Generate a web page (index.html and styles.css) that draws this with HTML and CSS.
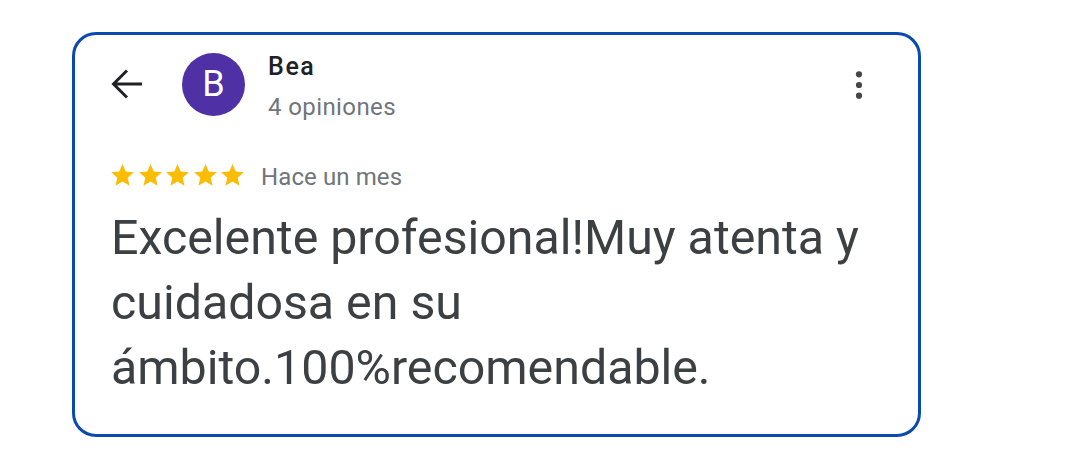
FILE: index.html
```html
<!DOCTYPE html>
<html lang="es">
<head>
<meta charset="utf-8">
<title>Opinión</title>
<link rel="stylesheet" href="styles.css">
</head>
<body>
<div class="card">
  <div class="header">
    <svg class="back" width="32" height="32" viewBox="0 0 32 32" aria-hidden="true">
      <path d="M31 16H3M16 2.5L2.5 16L16 29.5" fill="none" stroke="#202124" stroke-width="3"/>
    </svg>
    <div class="avatar">B</div>
    <div class="who">
      <div class="name">Bea</div>
      <div class="count">4 opiniones</div>
    </div>
    <svg class="more" width="10" height="32" viewBox="0 0 10 32" aria-hidden="true">
      <circle cx="5" cy="5.3" r="3.1" fill="#444746"/>
      <circle cx="5" cy="16" r="3.1" fill="#444746"/>
      <circle cx="5" cy="26.7" r="3.1" fill="#444746"/>
    </svg>
  </div>
  <div class="meta">
    <div class="stars">
      <svg width="23" height="22" viewBox="2 2 20 19.27"><path d="M12 17.27L18.18 21l-1.64-7.03L22 9.24l-7.19-.61L12 2 9.19 8.630 2 9.24l5.46 4.73L5.82 21z" fill="#fbbc04"/></svg>
      <svg width="23" height="22" viewBox="2 2 20 19.27"><path d="M12 17.27L18.18 21l-1.64-7.03L22 9.24l-7.19-.61L12 2 9.19 8.63 2 9.24l5.46 4.73L5.82 21z" fill="#fbbc04"/></svg>
      <svg width="23" height="22" viewBox="2 2 20 19.27"><path d="M12 17.27L18.18 21l-1.64-7.03L22 9.24l-7.19-.61L12 2 9.19 8.63 2 9.24l5.46 4.73L5.82 21z" fill="#fbbc04"/></svg>
      <svg width="23" height="22" viewBox="2 2 20 19.27"><path d="M12 17.27L18.18 21l-1.64-7.03L22 9.24l-7.19-.61L12 2 9.19 8.63 2 9.24l5.46 4.73L5.82 21z" fill="#fbbc04"/></svg>
      <svg width="23" height="22" viewBox="2 2 20 19.27"><path d="M12 17.27L18.18 21l-1.64-7.03L22 9.24l-7.19-.61L12 2 9.19 8.63 2 9.24l5.46 4.73L5.82 21z" fill="#fbbc04"/></svg>
    </div>
    <span class="when">Hace un mes</span>
  </div>
  <p class="review">Excelente profesional!Muy atenta y cuidadosa en su ámbito.100%recomendable.</p>
</div>
</body>
</html>
```

FILE: styles.css
```css
html, body {
  margin: 0;
  padding: 0;
  background: #ffffff;
}

body {
  font-family: Roboto, "Liberation Sans", Arial, sans-serif;
  padding: 32px 0 0 72px;
}

.card {
  box-sizing: border-box;
  width: 849px;
  height: 405px;
  border: 3px solid #0a4aae;
  border-radius: 24px;
  padding: 18px 0 0 36px;
}

.header {
  display: flex;
  align-items: flex-start;
  padding-right: 54px;
}

.back {
  display: block;
  margin-top: 15px;
  flex: none;
}

.avatar {
  flex: none;
  width: 63px;
  height: 63px;
  margin-left: 39px;
  border-radius: 50%;
  background: #5030a5;
  color: #ffffff;
  font-size: 36px;
  line-height: 63px;
  text-align: center;
}

.who {
  margin-left: 23px;
}

.name {
  font-size: 25px;
  font-weight: 500;
  line-height: 27px;
  letter-spacing: 1.6px;
  color: #202124;
}

.count {
  margin-top: 13px;
  font-size: 24px;
  line-height: 28px;
  letter-spacing: 0.4px;
  color: #70757a;
}

.more {
  display: block;
  margin-left: auto;
  margin-top: 16px;
  flex: none;
}

.meta {
  display: flex;
  align-items: center;
  margin-top: 43px;
  height: 22px;
}

.stars {
  display: flex;
  gap: 4.5px;
}

.stars svg {
  display: block;
}

.when {
  margin-left: 17px;
  padding-top: 4px;
  font-size: 24px;
  line-height: 22px;
  letter-spacing: 0.1px;
  color: #70757a;
}

.review {
  margin: 19px 0 0 0;
  width: 780px;
  font-size: 48.3px;
  line-height: 65px;
  color: #3c4043;
}
```
